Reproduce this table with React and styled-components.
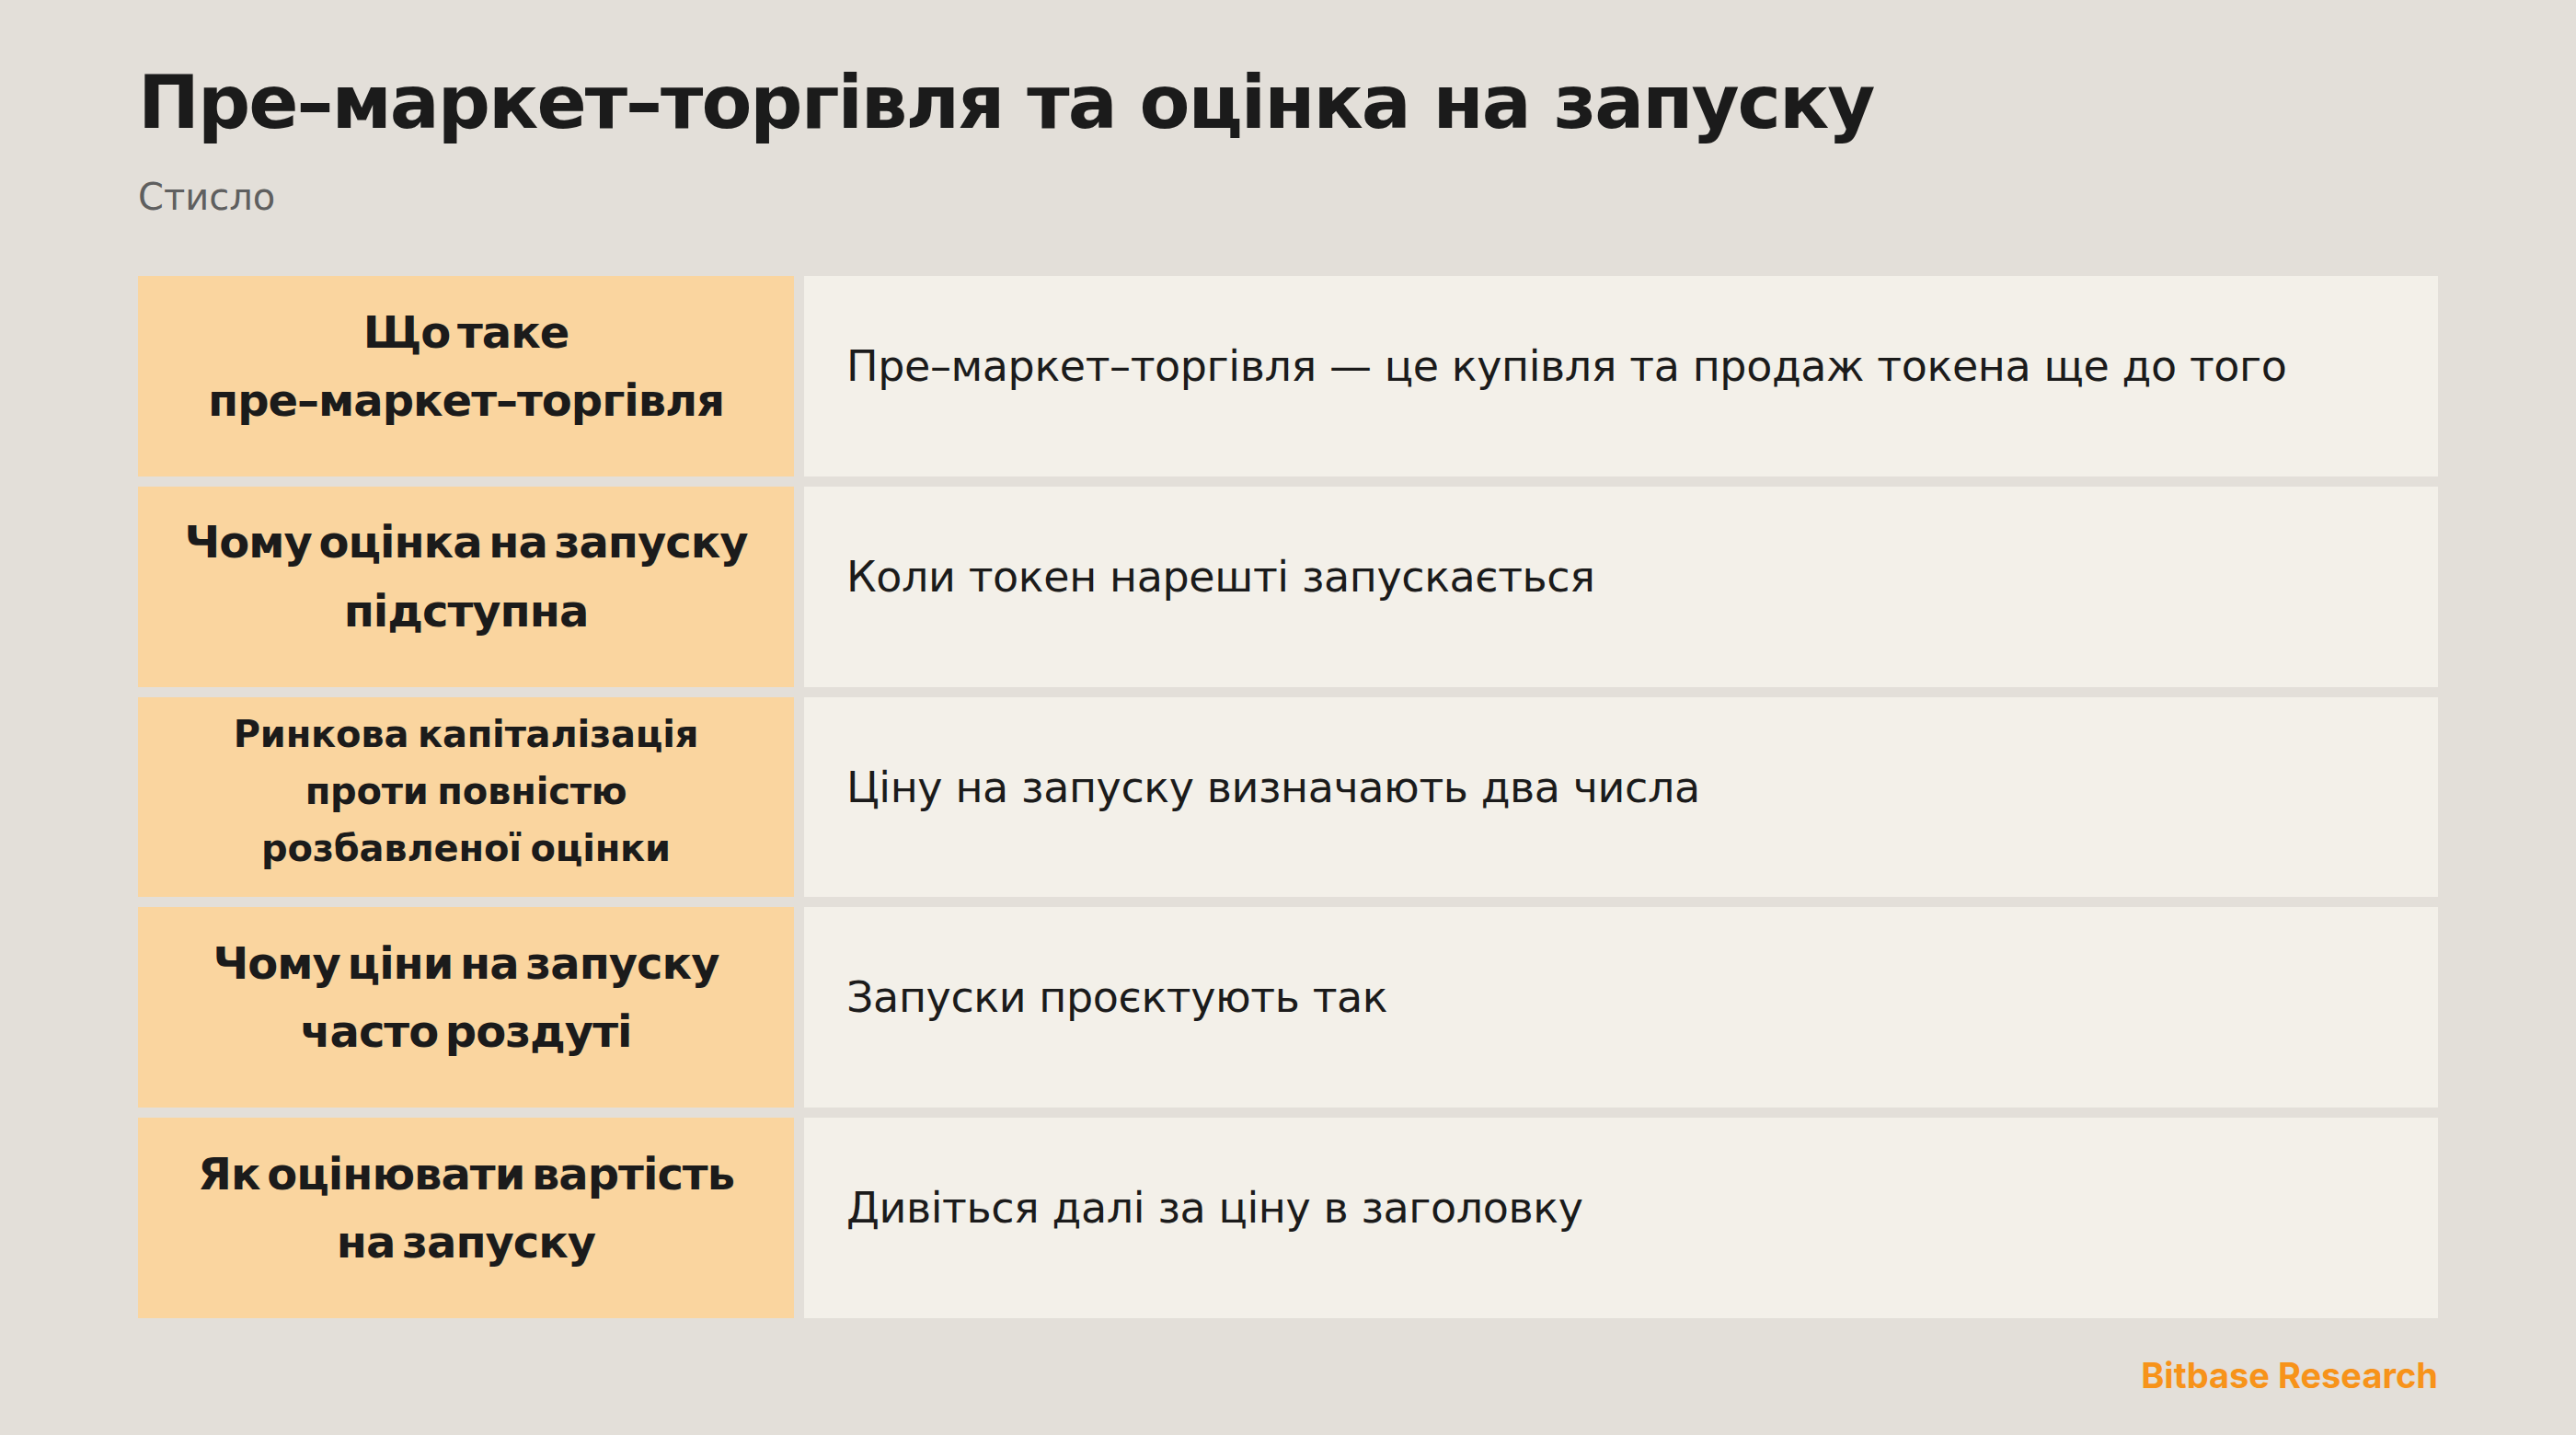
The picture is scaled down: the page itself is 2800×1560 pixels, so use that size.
import React from "react";
import styled, { createGlobalStyle } from "styled-components";

const GlobalStyle = createGlobalStyle`
  html, body {
    margin: 0;
    padding: 0;
    background: #e3dfd9;
  }
  body {
    font-family: "DejaVu Sans", "Liberation Sans", sans-serif;
    color: #1b1b1b;
  }
`;

const Page = styled.main`
  width: 2800px;
  height: 1560px;
  box-sizing: border-box;
  padding: 64px 150px 0;
  display: flex;
  flex-direction: column;
  background: #e3dfd9;
`;

const Title = styled.h1`
  margin: 0;
  font-size: 80px;
  line-height: 96px;
  font-weight: 700;
  letter-spacing: -2px;
  color: #1b1b1b;
`;

const Subtitle = styled.p`
  margin: 30px 0 0;
  font-size: 40px;
  line-height: 48px;
  color: #5f5f5f;
`;

const Table = styled.section`
  margin-top: 62px;
  height: 1133px;
  display: grid;
  grid-template-columns: 713px 1fr;
  grid-auto-rows: 1fr;
  gap: 11px;
`;

const Label = styled.div`
  background: #fad59f;
  display: flex;
  align-items: center;
  justify-content: center;
  text-align: center;
  box-sizing: border-box;
  padding: ${(p) => (p.$small ? "0 24px 12px" : "0 24px 22px")};
  font-weight: 700;
  font-size: ${(p) => (p.$small ? "40px" : "48px")};
  line-height: 1.55;
  letter-spacing: ${(p) => (p.$small ? "-0.2px" : "-1px")};
  word-spacing: ${(p) => (p.$small ? "-4px" : "-8px")};
`;

const Value = styled.div`
  background: #f3f0e9;
  display: flex;
  align-items: center;
  box-sizing: border-box;
  padding: 0 46px 20px;
  font-size: 46px;
  line-height: 1.3;
  letter-spacing: -0.4px;
`;

const Footer = styled.footer`
  margin-top: 40px;
  display: flex;
  justify-content: flex-end;
  font-family: Inter, "Liberation Sans", sans-serif;
  font-weight: 700;
  font-size: 38px;
  line-height: 44px;
  color: #f7931a;
`;

const rows = [
  {
    label: (
      <>
        Що таке
        <br />
        пре–маркет–торгівля
      </>
    ),
    text: "Пре–маркет–торгівля — це купівля та продаж токена ще до того",
  },
  {
    label: (
      <>
        Чому оцінка на запуску
        <br />
        підступна
      </>
    ),
    text: "Коли токен нарешті запускається",
  },
  {
    label: (
      <>
        Ринкова капіталізація
        <br />
        проти повністю
        <br />
        розбавленої оцінки
      </>
    ),
    text: "Ціну на запуску визначають два числа",
    small: true,
  },
  {
    label: (
      <>
        Чому ціни на запуску
        <br />
        часто роздуті
      </>
    ),
    text: "Запуски проєктують так",
  },
  {
    label: (
      <>
        Як оцінювати вартість
        <br />
        на запуску
      </>
    ),
    text: "Дивіться далі за ціну в заголовку",
  },
];

const App = () => (
  <>
    <GlobalStyle />
    <Page>
      <Title>Пре–маркет–торгівля та оцінка на запуску</Title>
      <Subtitle>Стисло</Subtitle>
      <Table>
        {rows.map((row, i) => (
          <React.Fragment key={i}>
            <Label $small={row.small}>{row.label}</Label>
            <Value>{row.text}</Value>
          </React.Fragment>
        ))}
      </Table>
      <Footer>Bitbase Research</Footer>
    </Page>
  </>
);

export default App;
